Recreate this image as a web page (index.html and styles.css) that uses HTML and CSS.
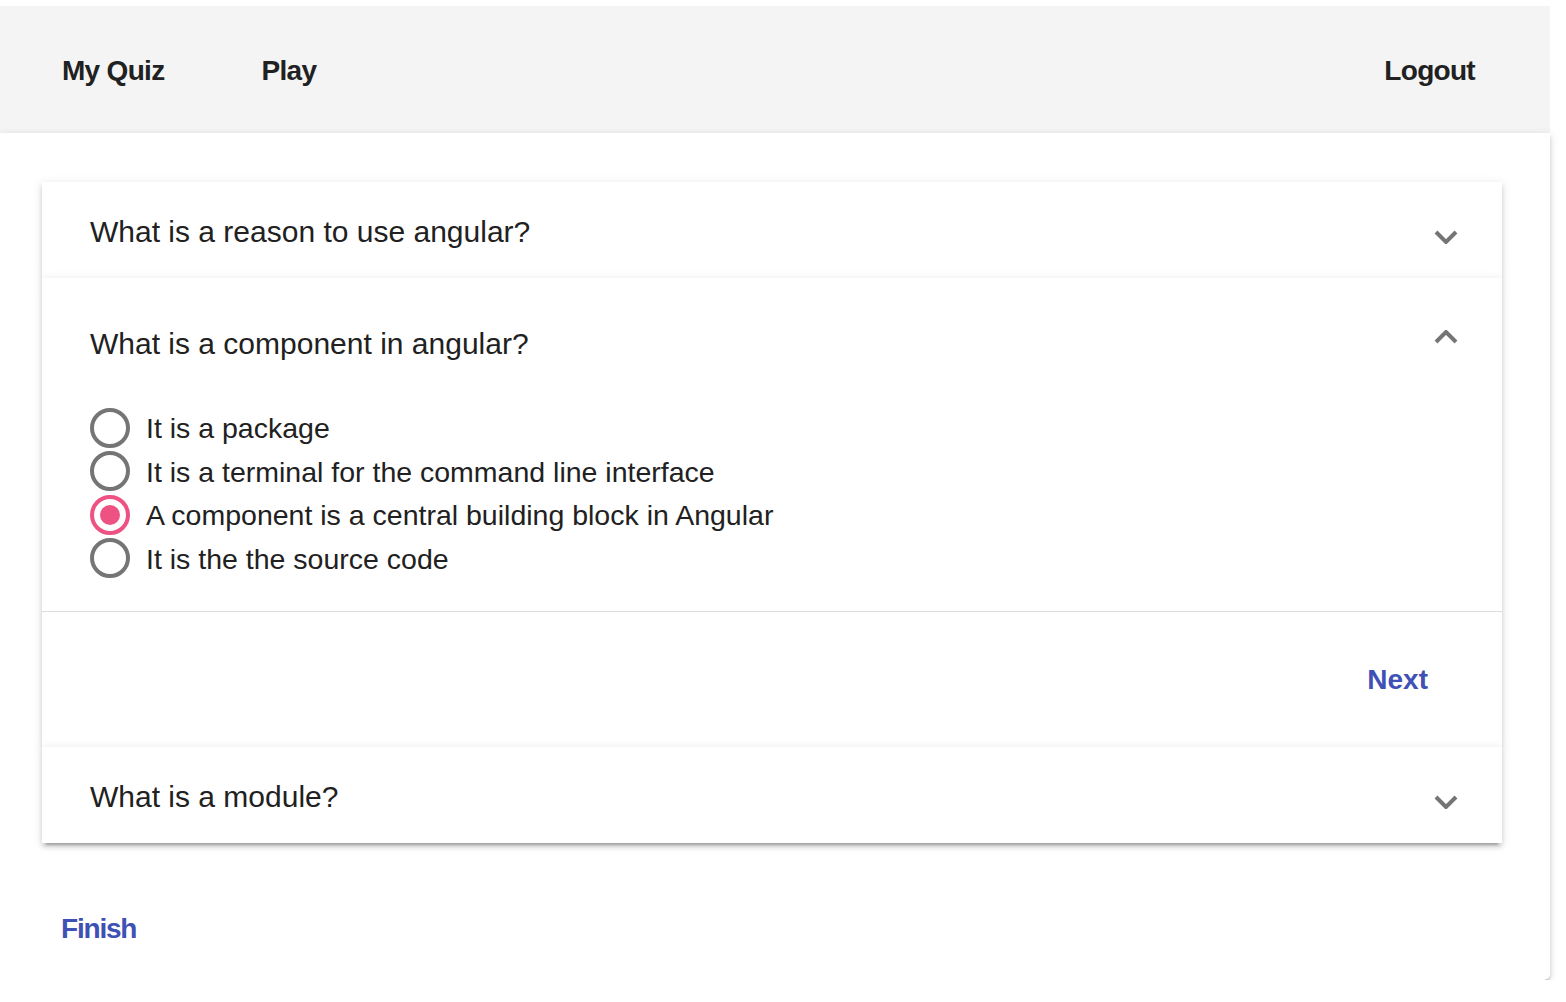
FILE: index.html
```html
<!DOCTYPE html>
<html lang="en">
<head>
<meta charset="utf-8">
<title>My Quiz</title>
<link rel="stylesheet" href="styles.css">
</head>
<body>
<div class="app">
  <header class="toolbar">
    <a class="nav-link">My Quiz</a>
    <a class="nav-link">Play</a>
    <span class="spacer"></span>
    <a class="nav-link">Logout</a>
  </header>
  <main class="card">
    <div class="accordion">
      <section class="panel">
        <div class="panel-header collapsed">
          <span class="panel-title">What is a reason to use angular?</span>
          <svg class="chevron down" viewBox="0 0 24 14" width="24" height="14"><polyline points="2,2 12,12 22,2"/></svg>
        </div>
      </section>
      <section class="panel">
        <div class="panel-header expanded">
          <span class="panel-title">What is a component in angular?</span>
          <svg class="chevron up" viewBox="0 0 24 14" width="24" height="14"><polyline points="2,12 12,2 22,12"/></svg>
        </div>
        <div class="panel-body">
          <div class="radio-group">
            <label class="radio"><span class="radio-circle"></span><span class="radio-label">It is a package</span></label>
            <label class="radio"><span class="radio-circle"></span><span class="radio-label">It is a terminal for the command line interface</span></label>
            <label class="radio checked"><span class="radio-circle"></span><span class="radio-label">A component is a central building block in Angular</span></label>
            <label class="radio"><span class="radio-circle"></span><span class="radio-label">It is the the source code</span></label>
          </div>
        </div>
        <div class="panel-actions">
          <button class="text-button">Next</button>
        </div>
      </section>
      <section class="panel">
        <div class="panel-header collapsed">
          <span class="panel-title">What is a module?</span>
          <svg class="chevron down" viewBox="0 0 24 14" width="24" height="14"><polyline points="2,2 12,12 22,2"/></svg>
        </div>
      </section>
    </div>
    <div class="card-footer">
      <button class="text-button finish">Finish</button>
    </div>
  </main>
</div>
</body>
</html>
```

FILE: styles.css
```css
html, body {
  margin: 0;
  padding: 0;
  background: #ffffff;
}

body {
  padding-top: 6px;
  font-family: "Liberation Sans", Arial, Helvetica, sans-serif;
  color: #212121;
}

.app {
  width: 1550px;
}

.toolbar {
  height: 127px;
  background: #f4f4f4;
  display: flex;
  align-items: center;
  padding: 2px 43px 0 30px;
  gap: 33px;
  box-sizing: border-box;
}

.nav-link {
  font-size: 28px;
  font-weight: 700;
  letter-spacing: -0.7px;
  padding: 0 32px;
  line-height: 72px;
  color: #212121;
  cursor: pointer;
}

.spacer {
  flex: 1;
}

.card {
  display: block;
  background: #ffffff;
  height: 847px;
  box-sizing: border-box;
  padding-top: 49px;
  border-radius: 0 0 6px 0;
  box-shadow: 0 4px 2px -2px rgba(0,0,0,.2), 0 4px 4px 0 rgba(0,0,0,.14), 0 2px 10px 0 rgba(0,0,0,.12);
}

.accordion {
  margin: 0 48px 0 42px;
  display: flex;
  flex-direction: column;
}

.panel {
  background: #ffffff;
  box-shadow: 0 6px 2px -4px rgba(0,0,0,.2), 0 4px 4px 0 rgba(0,0,0,.14), 0 2px 10px 0 rgba(0,0,0,.12);
  position: relative;
}

.panel-header {
  display: flex;
  align-items: center;
  padding: 0 44px 0 48px;
  box-sizing: border-box;
}

.panel-header.collapsed {
  height: 96px;
}

.panel-header.expanded {
  height: 128px;
}

.panel-title {
  flex: 1;
  font-size: 30px;
  padding-top: 4px;
}

.chevron {
  fill: none;
  stroke: #757575;
  stroke-width: 4;
  stroke-linejoin: miter;
  stroke-linecap: butt;
}

.chevron.down {
  margin-top: 14px;
}

.chevron.up {
  margin-top: -10px;
}

.panel-body {
  padding: 0 48px 31px 48px;
}

.radio-group {
  display: flex;
  flex-direction: column;
}

.radio {
  display: flex;
  align-items: center;
  height: 43.5px;
  gap: 16px;
  cursor: pointer;
}

.radio-circle {
  width: 40px;
  height: 40px;
  box-sizing: border-box;
  border: 4px solid #757575;
  border-radius: 50%;
  display: flex;
  align-items: center;
  justify-content: center;
  flex: none;
}

.radio.checked .radio-circle {
  border-color: #ee5283;
}

.radio.checked .radio-circle::after {
  content: "";
  width: 20px;
  height: 20px;
  border-radius: 50%;
  background: #ee5283;
}

.radio-label {
  font-size: 28.5px;
  padding-top: 2px;
}

.panel-actions {
  border-top: 1px solid #dcdcdc;
  height: 136px;
  box-sizing: border-box;
  display: flex;
  align-items: center;
  justify-content: flex-end;
  padding: 0 42px 0 48px;
}

.text-button {
  font-family: "Liberation Sans", Arial, Helvetica, sans-serif;
  font-size: 28px;
  font-weight: 700;
  color: #3f51b5;
  background: transparent;
  border: none;
  padding: 0 32px;
  height: 72px;
  line-height: 72px;
  cursor: pointer;
}

.text-button.finish {
  letter-spacing: -1.2px;
}

.card-footer {
  padding: 50px 0 14px 29px;
}
```
